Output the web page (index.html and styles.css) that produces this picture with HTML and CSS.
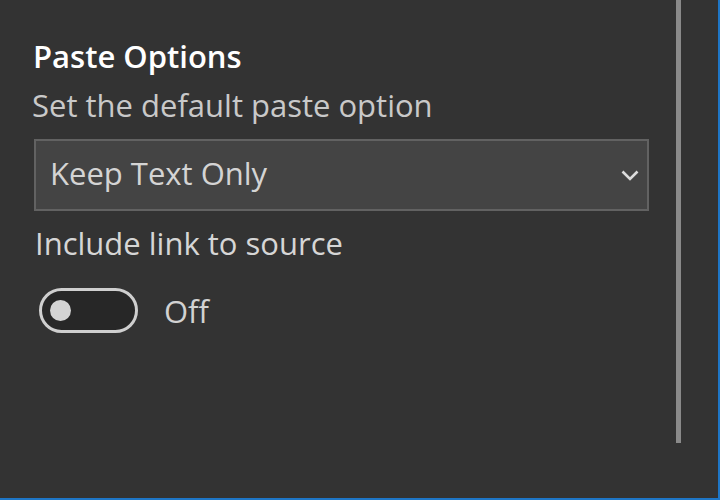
FILE: index.html
```html
<!DOCTYPE html>
<html lang="en">
<head>
<meta charset="utf-8">
<title>Paste Options</title>
<link rel="stylesheet" href="styles.css">
</head>
<body>
<div class="frame">
  <div class="panel">
    <h1 class="title">Paste Options</h1>
    <p class="subtitle">Set the default paste option</p>
    <div class="select">
      <span class="select-value">Keep Text Only</span>
      <svg class="chevron" width="18" height="11" viewBox="0 0 18 11"><path d="M1.5 1.5 L9 9 L16.5 1.5" fill="none" stroke="#dcdcdc" stroke-width="2.6"/></svg>
    </div>
    <p class="label">Include link to source</p>
    <div class="toggle-row">
      <span class="toggle"><span class="knob"></span></span>
      <span class="toggle-state">Off</span>
    </div>
  </div>
  <div class="scroll-track"><div class="scroll-thumb"></div></div>
</div>
</body>
</html>
```

FILE: styles.css
```css
html, body {
  margin: 0;
  padding: 0;
  background: #333333;
}

body {
  font-family: "Open Sans", "Noto Sans", sans-serif;
  width: 720px;
  height: 500px;
  overflow: hidden;
}

.frame {
  box-sizing: border-box;
  width: 720px;
  height: 500px;
  display: flex;
  border-right: 2px solid #1e76c6;
  border-bottom: 2px solid #1e76c6;
}

.panel {
  flex: 1;
  padding: 36px 0 0 34px;
  display: flex;
  flex-direction: column;
  align-items: flex-start;
}

.title {
  margin: 0 0 9px -1px;
  font-size: 31px;
  line-height: 40px;
  font-weight: 600;
  color: #ffffff;
}

.subtitle {
  margin: 0 0 14px -2px;
  font-size: 31px;
  line-height: 40px;
  color: #c9c9c9;
}

.select {
  box-sizing: border-box;
  width: 615px;
  height: 72px;
  border: 2px solid #626262;
  background: #444444;
  display: flex;
  align-items: center;
  justify-content: space-between;
  padding: 0 8px 4px 14px;
}

.select-value {
  font-size: 31px;
  line-height: 40px;
  color: #d4d4d4;
}

.chevron {
  display: block;
  margin-top: 4px;
}

.label {
  margin: 12px 0 25px 1px;
  font-size: 31px;
  line-height: 40px;
  color: #d6d6d6;
}

.toggle-row {
  display: flex;
  align-items: center;
  gap: 26px;
  padding-left: 5px;
}

.toggle {
  box-sizing: border-box;
  width: 99px;
  height: 45px;
  border: 3px solid #cfcfcf;
  border-radius: 23px;
  background: #272727;
  display: flex;
  align-items: center;
  padding-left: 8px;
}

.knob {
  width: 21px;
  height: 21px;
  border-radius: 50%;
  background: #d4d4d4;
}

.toggle-state {
  font-size: 31px;
  line-height: 40px;
  color: #d2d2d2;
}

.scroll-track {
  width: 5px;
  margin-right: 37px;
}

.scroll-thumb {
  width: 5px;
  height: 443px;
  background: #8a8a8a;
}
```
